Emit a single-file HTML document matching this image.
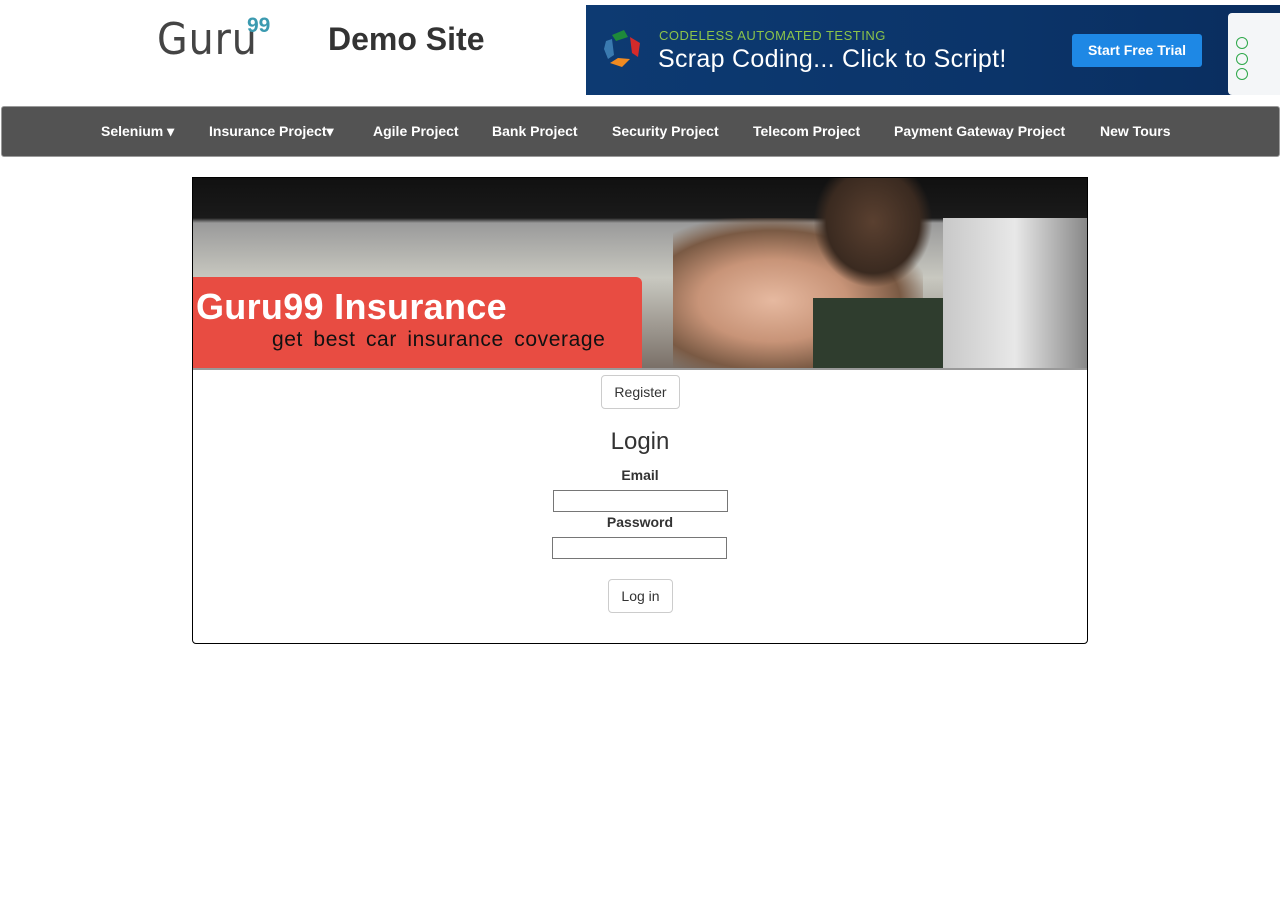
<!DOCTYPE html>
<html><head><meta charset="utf-8"><style>
body{margin:0;width:1280px;height:898px;background:#fff;font-family:"Liberation Sans",Arial,sans-serif;position:relative;overflow:hidden;color:#333}
.a{position:absolute}
.nav{left:1px;top:106px;width:1277px;height:49px;background:#535353;border:1px solid #9a9a9a;border-radius:3px}
.nav span{position:absolute;top:16px;color:#fff;font-weight:bold;font-size:14px;white-space:nowrap}
.btn{border:1px solid #ccc;border-radius:4px;background:#fff;font-size:14px;color:#333;text-align:center;box-sizing:border-box}
.inp{border:1px solid #767676;background:#fff;box-sizing:border-box}
</style></head><body>
<div class="a" style="left:157px;top:14px;font-family:'Comic Sans MS','DejaVu Sans',sans-serif;font-size:44px;color:#444;transform:scaleX(0.9);transform-origin:left;letter-spacing:1px">Guru</div>
<div class="a" style="left:247px;top:14px;font-size:21px;font-weight:bold;color:#3b9ab0">99</div>
<div class="a" style="left:328px;top:21px;font-size:32px;font-weight:bold;color:#333">Demo Site</div>

<div class="a" style="left:586px;top:5px;width:694px;height:90px;background:linear-gradient(90deg,#0d3a72,#0b3469 60%,#0a2d5e)">
  <svg class="a" style="left:16px;top:22px" width="42" height="44" viewBox="0 0 42 44">
    <path d="M10 8 L22 3 L26 10 L14 14Z" fill="#1e8a3a"/>
    <path d="M28 10 L38 16 L36 30 L30 26Z" fill="#d42a2a"/>
    <path d="M28 32 L20 40 L8 36 L16 31Z" fill="#f08a20"/>
    <path d="M4 14 L10 12 L12 28 L6 32 L2 22Z" fill="#3a7ab0"/>
  </svg>
  <div class="a" style="left:73px;top:23px;font-size:13px;color:#8bc34a;letter-spacing:0.5px">CODELESS AUTOMATED TESTING</div>
  <div class="a" style="left:72px;top:40px;font-size:25px;color:#fff;letter-spacing:0.3px">Scrap Coding... Click to Script!</div>
  <div class="a" style="left:486px;top:29px;width:130px;height:33px;background:#1e88e5;border-radius:3px;color:#fff;font-size:14px;font-weight:bold;text-align:center;line-height:33px">Start Free Trial</div>
  <div class="a" style="left:642px;top:8px;width:60px;height:82px;background:#f4f6f8;border-radius:4px"></div>
  <div class="a" style="left:650px;top:32px;width:10px;height:10px;border:1px solid #2ea84a;border-radius:50%"></div>
  <div class="a" style="left:650px;top:48px;width:10px;height:10px;border:1px solid #2ea84a;border-radius:50%"></div>
  <div class="a" style="left:650px;top:63px;width:10px;height:10px;border:1px solid #2ea84a;border-radius:50%"></div>
</div>

<div class="a nav">
<span style="left:99px">Selenium ▾</span>
<span style="left:207px">Insurance Project▾</span>
<span style="left:371px">Agile Project</span>
<span style="left:490px">Bank Project</span>
<span style="left:610px">Security Project</span>
<span style="left:751px">Telecom Project</span>
<span style="left:892px">Payment Gateway Project</span>
<span style="left:1098px">New Tours</span>
</div>

<div class="a" style="left:192px;top:177px;width:894px;height:465px;border:1px solid #000;border-radius:0 0 4px 4px"></div>
<div class="a" style="left:193px;top:178px;width:894px;height:190px;background:linear-gradient(180deg,#111 0,#1a1a1a 40px,#9a9a9a 45px,#c8c8c0 100px,#7a7068 190px);overflow:hidden">
  <div class="a" style="left:480px;top:40px;width:250px;height:150px;background:radial-gradient(ellipse at 40% 55%,#e6b9a0 0,#c89478 35%,#7a5a44 60%,transparent 75%)"></div>
  <div class="a" style="left:620px;top:0;width:120px;height:110px;background:radial-gradient(ellipse at 50% 40%,#5a4030 0,#3a2a20 55%,transparent 70%)"></div>
  <div class="a" style="left:620px;top:120px;width:130px;height:70px;background:#2f3d2e"></div>
  <div class="a" style="left:750px;top:40px;width:144px;height:150px;background:linear-gradient(90deg,#c8c8c8,#e8e8e8 50%,#888)"></div>
</div>
<div class="a" style="left:193px;top:277px;width:449px;height:91px;background:#e84c42;border-radius:0 6px 0 0"></div>
<div class="a" style="left:196px;top:286px;font-size:36px;font-weight:bold;color:#fff;letter-spacing:0.3px">Guru99 Insurance</div>
<div class="a" style="left:272px;top:328px;font-size:21px;color:#111;word-spacing:4px;letter-spacing:0.6px">get best car insurance coverage</div>
<div class="a" style="left:193px;top:368px;width:894px;height:2px;background:#999"></div>

<div class="a btn" style="left:601px;top:375px;width:79px;height:34px;line-height:32px">Register</div>
<div class="a" style="left:0;width:1280px;top:428px;text-align:center;font-size:24px;color:#333">Login</div>
<div class="a" style="left:0;width:1280px;top:467px;text-align:center;font-size:14px;font-weight:bold">Email</div>
<div class="a inp" style="left:553px;top:490px;width:175px;height:22px"></div>
<div class="a" style="left:0;width:1280px;top:514px;text-align:center;font-size:14px;font-weight:bold">Password</div>
<div class="a inp" style="left:552px;top:537px;width:175px;height:22px"></div>
<div class="a btn" style="left:608px;top:579px;width:65px;height:34px;line-height:32px">Log in</div>
</body></html>
